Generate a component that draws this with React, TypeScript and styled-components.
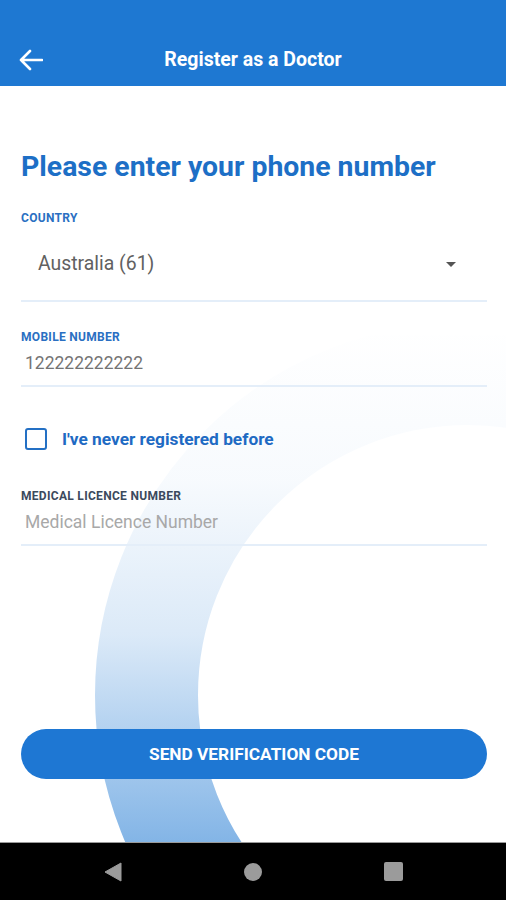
import React from 'react';
import styled, { createGlobalStyle } from 'styled-components';

const GlobalStyle = createGlobalStyle`
  html, body {
    margin: 0;
    padding: 0;
    height: 100%;
    background: #fff;
    overflow: hidden;
  }
  #root {
    height: 100%;
  }
`;

const Screen = styled.div`
  width: 506px;
  height: 900px;
  display: flex;
  flex-direction: column;
  font-family: Roboto, 'Noto Sans', Arial, sans-serif;
  background: #fff;
`;

const AppBar = styled.header`
  height: 86px;
  box-sizing: border-box;
  padding-top: 34px;
  background: #1e78d2;
  display: grid;
  grid-template-columns: 60px 1fr 60px;
  align-items: center;
  flex-shrink: 0;
`;

const BackButton = styled.button`
  height: 52px;
  border: none;
  background: none;
  padding: 0 0 0 19px;
  display: flex;
  align-items: center;
  cursor: pointer;
`;

const Title = styled.h1`
  margin: 0;
  text-align: center;
  color: #fff;
  font-size: 19.5px;
  font-weight: 700;
  line-height: 52px;
`;

const Body = styled.main`
  flex: 1;
  position: relative;
  overflow: hidden;
  display: flex;
  flex-direction: column;
  padding: 0 19px 0 21px;
`;

// decorative ring behind the form
const Ring = styled.svg`
  position: absolute;
  left: 0;
  top: 0;
  width: 506px;
  height: 756px;
  pointer-events: none;
  z-index: 0;
`;

const Form = styled.div`
  position: relative;
  z-index: 1;
  display: flex;
  flex-direction: column;
  flex: 1;
`;

const Heading = styled.h2`
  margin: 65px 0 0;
  color: #1d6fc6;
  font-size: 28.4px;
  line-height: 32px;
  font-weight: 700;
`;

const Label = styled.div<{ $muted?: boolean; $gap: number }>`
  margin-top: ${(p) => p.$gap}px;
  font-size: 12px;
  line-height: 14px;
  font-weight: 700;
  letter-spacing: 0.3px;
  color: ${(p) => (p.$muted ? '#3c4a5d' : '#2a6fc2')};
`;

const SelectRow = styled.div`
  display: flex;
  align-items: center;
  justify-content: space-between;
  padding: 28px 31px 25px 17px;
  border-bottom: 2px solid #e4eef9;
  font-size: 19.4px;
  line-height: 22px;
  color: #616161;
`;

const Field = styled.div<{ $placeholder?: boolean }>`
  margin-top: 9px;
  padding: 0 0 12px 4px;
  border-bottom: 2px solid #e4eef9;
  font-size: 17.5px;
  line-height: 20px;
  color: ${(p) => (p.$placeholder ? '#a8a8a8' : '#747474')};
`;

const CheckRow = styled.label`
  margin-top: 41px;
  display: flex;
  align-items: center;
  gap: 15px;
  padding-left: 4px;
  color: #1e6ac3;
  font-size: 17.3px;
  font-weight: 700;
  line-height: 22px;
`;

const CheckBox = styled.span`
  width: 22px;
  height: 22px;
  box-sizing: border-box;
  border: 2px solid #2470c4;
  border-radius: 3px;
  background: #fff;
`;

const SubmitButton = styled.button`
  margin: auto 0 63px;
  height: 50px;
  border: none;
  border-radius: 25px;
  background: #1e77d3;
  color: #fff;
  font-family: inherit;
  font-size: 17.3px;
  font-weight: 700;
  cursor: pointer;
`;

const NavBar = styled.nav`
  height: 58px;
  flex-shrink: 0;
  box-sizing: border-box;
  border-top: 1px solid #9a9a9a;
  background: #000;
  display: grid;
  grid-template-columns: repeat(3, 140px);
  justify-content: center;
  align-items: center;
  justify-items: center;
`;

const App: React.FC = () => {
  return (
    <>
      <GlobalStyle />
      <Screen>
        <AppBar>
          <BackButton aria-label="Back">
            <svg width="24" height="22" viewBox="0 0 24 22">
              <path
                d="M23 11H2M11 2L2 11l9 9"
                fill="none"
                stroke="#fff"
                strokeWidth="2.6"
                strokeLinecap="round"
                strokeLinejoin="round"
              />
            </svg>
          </BackButton>
          <Title>Register as a Doctor</Title>
          <span />
        </AppBar>

        <Body>
          <Ring viewBox="0 0 506 756">
            <defs>
              <linearGradient id="ringFade" gradientUnits="userSpaceOnUse" x1="0" y1="240" x2="0" y2="756">
                <stop offset="0" stopColor="#1e78d2" stopOpacity="0" />
                <stop offset="0.3" stopColor="#1e78d2" stopOpacity="0.035" />
                <stop offset="0.6" stopColor="#1e78d2" stopOpacity="0.16" />
                <stop offset="1" stopColor="#1e78d2" stopOpacity="0.55" />
              </linearGradient>
            </defs>
            <circle cx="468" cy="609" r="321.5" fill="none" stroke="url(#ringFade)" strokeWidth="103" />
          </Ring>

          <Form>
            <Heading>Please enter your phone number</Heading>

            <Label $gap={28}>COUNTRY</Label>
            <SelectRow>
              <span>Australia (61)</span>
              <svg width="10" height="5" viewBox="0 0 10 5">
                <path d="M0 0h10L5 5z" fill="#555" />
              </svg>
            </SelectRow>

            <Label $gap={28}>MOBILE NUMBER</Label>
            <Field>122222222222</Field>

            <CheckRow>
              <CheckBox />
              I've never registered before
            </CheckRow>

            <Label $gap={39} $muted>
              MEDICAL LICENCE NUMBER
            </Label>
            <Field $placeholder>Medical Licence Number</Field>

            <SubmitButton>SEND VERIFICATION CODE</SubmitButton>
          </Form>
        </Body>

        <NavBar>
          <svg width="18" height="20" viewBox="0 0 18 20">
            <path d="M17 1v18L1 10z" fill="#9b9b9b" strokeLinejoin="round" stroke="#9b9b9b" strokeWidth="1" />
          </svg>
          <svg width="18" height="18" viewBox="0 0 18 18">
            <circle cx="9" cy="9" r="9" fill="#9b9b9b" />
          </svg>
          <svg width="19" height="19" viewBox="0 0 19 19">
            <rect width="19" height="19" rx="2" fill="#9b9b9b" />
          </svg>
        </NavBar>
      </Screen>
    </>
  );
};

export default App;
